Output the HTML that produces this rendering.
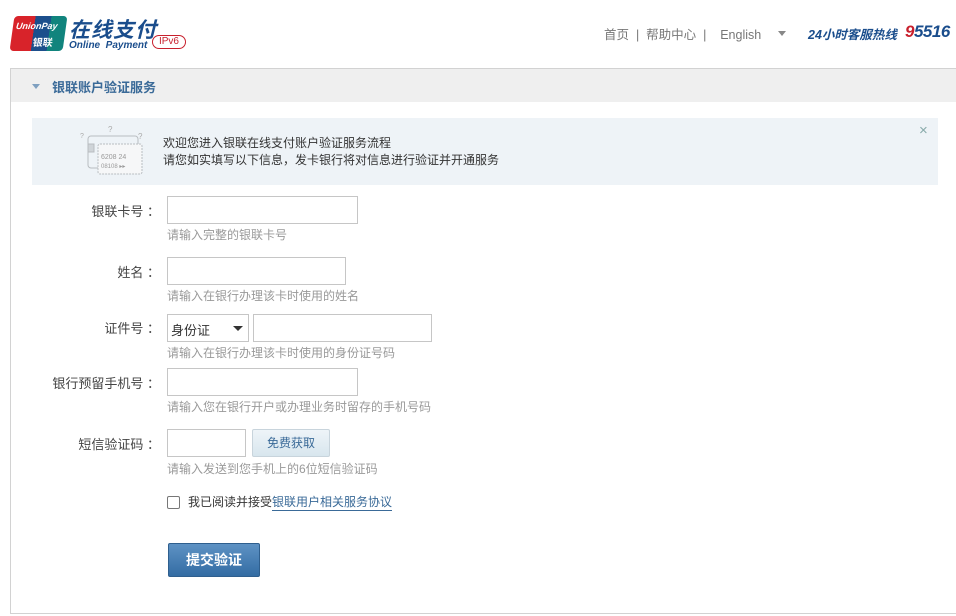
<!DOCTYPE html>
<html><head><meta charset="utf-8"><style>
*{margin:0;padding:0;box-sizing:border-box}
body{width:956px;height:616px;background:#fff;font-family:"Liberation Sans","Noto Sans CJK SC",sans-serif;font-size:12px;color:#333;position:relative;overflow:hidden}
.a{position:absolute}
.inp{position:absolute;border:1px solid #c6c6c6;background:#fff;height:28px}
.lbl{position:absolute;right:796px;font-size:13px;color:#444;white-space:nowrap}
.hint{position:absolute;left:167px;color:#999;font-size:12px}
</style></head><body>
<!-- logo -->
<div class="a" style="left:12px;top:16px;width:53px;height:35px;border-radius:4px;overflow:hidden;background:linear-gradient(90deg,#d8232a 0 40%,#1c4f8c 40% 70%,#11847d 70%);transform:skewX(-8deg)">
<div class="a" style="left:3px;top:5px;color:#fff;font-weight:bold;font-style:italic;font-size:9px">UnionPay</div>
<div class="a" style="left:22px;top:18px;color:#fff;font-weight:bold;font-size:10px">银联</div></div>
<div class="a" style="left:69px;top:14px;font-size:21px;font-style:italic;font-weight:bold;color:#1a4d8c;letter-spacing:1px">在线支付</div>
<div class="a" style="left:69px;top:40px;font-size:10px;font-style:italic;font-weight:bold;color:#1a4d8c">Online&nbsp; Payment</div>
<div class="a" style="left:152px;top:35px;width:34px;height:14px;border:1px solid #c8202d;border-radius:8px;color:#c8202d;font-size:10px;line-height:12px;text-align:center">IPv6</div>
<!-- top nav -->
<div class="a" style="left:604px;top:24px;color:#777;font-size:12.5px;white-space:nowrap">首页 &nbsp;| &nbsp;帮助中心 &nbsp;| &nbsp;&nbsp; English</div>
<div class="a" style="left:778px;top:31px;border:4px solid transparent;border-top:5px solid #888"></div>
<div class="a" style="left:808px;top:24px;color:#1a4d8c;font-size:12.5px;font-style:italic;font-weight:bold">24小时客服热线</div>
<div class="a" style="left:905px;top:22px;color:#1a4d8c;font-size:17px;font-style:italic;font-weight:bold;letter-spacing:-0.5px"><span style="color:#c8202d">9</span>5516</div>
<!-- panel -->
<div class="a" style="left:10px;top:68px;width:950px;height:546px;border:1px solid #d2d2d2"></div>
<div class="a" style="left:11px;top:69px;width:945px;height:33px;background:#efefef"></div>
<div class="a" style="left:32px;top:84px;border:4px solid transparent;border-top:5px solid #7fa0c0"></div>
<div class="a" style="left:52px;top:77px;color:#3a6a98;font-size:13px;font-weight:bold">银联账户验证服务</div>
<!-- info -->
<div class="a" style="left:32px;top:118px;width:906px;height:67px;background:#eef3f7"></div>
<svg class="a" style="left:78px;top:124px" width="70" height="55" viewBox="0 0 70 55" fill="none" stroke="#b8bcc0" stroke-width="1">
<rect x="10" y="12" width="50" height="32" rx="3"/><rect x="20" y="20" width="44" height="30" rx="2" fill="#f6f7f8" stroke-dasharray="2 1"/>
<rect x="10" y="20" width="6" height="8" fill="#cfd4d8"/>
<text x="23" y="35" font-size="7" fill="#999" stroke="none">6208 24</text>
<text x="23" y="44" font-size="6" fill="#999" stroke="none">08108 ▸▸</text>
<text x="30" y="8" font-size="8" fill="#aaa" stroke="none">?</text><text x="2" y="14" font-size="7" fill="#aaa" stroke="none">?</text><text x="60" y="15" font-size="8" fill="#aaa" stroke="none">?</text></svg>
<div class="a" style="left:163px;top:135px;font-size:12px;line-height:17px;color:#333">欢迎您进入银联在线支付账户验证服务流程<br>请您如实填写以下信息，发卡银行将对信息进行验证并开通服务</div>
<div class="a" style="left:919px;top:122px;color:#8aa;font-size:15px">×</div>
<!-- form -->
<div class="lbl" style="top:201px">银联卡号 ：</div>
<div class="inp" style="left:167px;top:196px;width:191px"></div>
<div class="hint" style="top:226px">请输入完整的银联卡号</div>
<div class="lbl" style="top:262px">姓名 ：</div>
<div class="inp" style="left:167px;top:257px;width:179px"></div>
<div class="hint" style="top:287px">请输入在银行办理该卡时使用的姓名</div>
<div class="lbl" style="top:318px">证件号 ：</div>
<div class="inp" style="left:167px;top:314px;width:82px;font-size:13px;padding:5px 3px">身份证</div>
<div class="a" style="left:233px;top:326px;border:5px solid transparent;border-top:5px solid #333"></div>
<div class="inp" style="left:253px;top:314px;width:179px"></div>
<div class="hint" style="top:344px">请输入在银行办理该卡时使用的身份证号码</div>
<div class="lbl" style="top:373px">银行预留手机号 ：</div>
<div class="inp" style="left:167px;top:368px;width:191px"></div>
<div class="hint" style="top:398px">请输入您在银行开户或办理业务时留存的手机号码</div>
<div class="lbl" style="top:434px">短信验证码 ：</div>
<div class="inp" style="left:167px;top:429px;width:79px"></div>
<div class="a" style="left:252px;top:429px;width:78px;height:28px;border:1px solid #c8d4dc;border-radius:2px;background:linear-gradient(#eef4f8,#d8e6ee);color:#3a6a98;font-size:12px;text-align:center;line-height:26px">免费获取</div>
<div class="hint" style="top:460px">请输入发送到您手机上的6位短信验证码</div>
<div class="a" style="left:167px;top:496px;width:13px;height:13px;border:1px solid #777;border-radius:2px"></div>
<div class="a" style="left:188px;top:493px;font-size:12px;color:#333">我已阅读并接受<span style="color:#3a6a98;border-bottom:1px solid #3a6a98;padding-bottom:1px">银联用户相关服务协议</span></div>
<div class="a" style="left:168px;top:543px;width:92px;height:34px;border:1px solid #2f5f8e;border-radius:2px;background:linear-gradient(#5e92c4,#336ca3);color:#fff;font-size:14px;font-weight:bold;text-align:center;line-height:32px">提交验证</div>
</body></html>
